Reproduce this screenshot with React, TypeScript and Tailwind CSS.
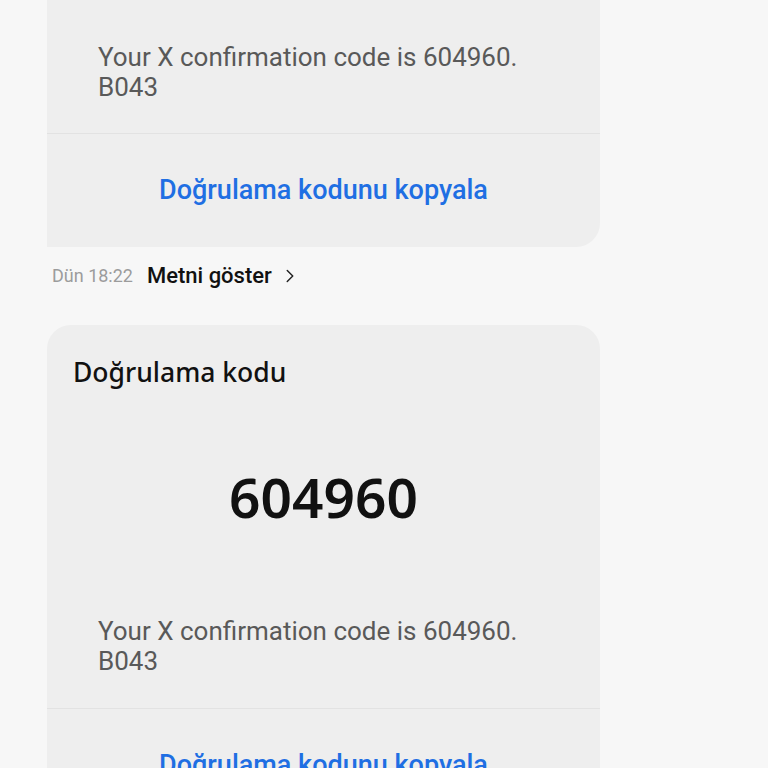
import { ChevronRight } from "lucide-react";

const body = "Your X confirmation code is 604960.";

function CopyButton() {
  return (
    <div className="h-[113px] flex items-center justify-center">
      <span className="text-[27px] font-medium text-[#1f6fe3] [font-family:Roboto,sans-serif]">
        Doğrulama kodunu kopyala
      </span>
    </div>
  );
}

function BodyText({ className }: { className: string }) {
  return (
    <div className={`px-[51px] text-[26px] leading-[30px] text-[#595959] [font-family:Roboto,sans-serif] ${className}`}>
      <p>{body}</p>
      <p>B043</p>
    </div>
  );
}

export default function App() {
  return (
    <div className="w-[768px] h-[768px] overflow-hidden bg-[#f7f7f7]">
      <div className="ml-[47px] w-[553px]">
        {/* Earlier message, top cut off */}
        <div className="bg-[#eeeeee] rounded-br-[24px]">
          <BodyText className="pt-[42px] pb-[31px]" />
          <div className="h-px bg-[#e2e2e2]" />
          <CopyButton />
        </div>

        {/* Timestamp row */}
        <div className="pt-[18px] pb-[38px] pl-[5px] flex items-center h-[78px]">
          <span className="text-[18px] text-[#9c9c9c] leading-[22px] [font-family:Roboto,sans-serif]">
            Dün 18:22
          </span>
          <span className="ml-[14px] text-[22px] font-medium text-[#111111] leading-[22px] [font-family:Roboto,sans-serif]">
            Metni göster
          </span>
          <ChevronRight className="ml-[7px] w-[22px] h-[22px] text-[#222222]" strokeWidth={1.6} />
        </div>

        {/* Verification card */}
        <div className="bg-[#eeeeee] rounded-t-[24px]">
          <div className="pt-[30px] pl-[26px] text-[26.5px] leading-[34px] font-medium text-[#111111] [font-family:'Noto_Sans',sans-serif]">
            Doğrulama kodu
          </div>
          <div className="mt-[73px] h-[70px] flex items-center justify-center text-[55px] font-semibold text-[#111111] [font-family:'Noto_Sans',sans-serif]">
            604960
          </div>
          <BodyText className="mt-[84px] pb-[32px]" />
          <div className="h-px bg-[#e2e2e2]" />
          <CopyButton />
        </div>
      </div>
    </div>
  );
}
